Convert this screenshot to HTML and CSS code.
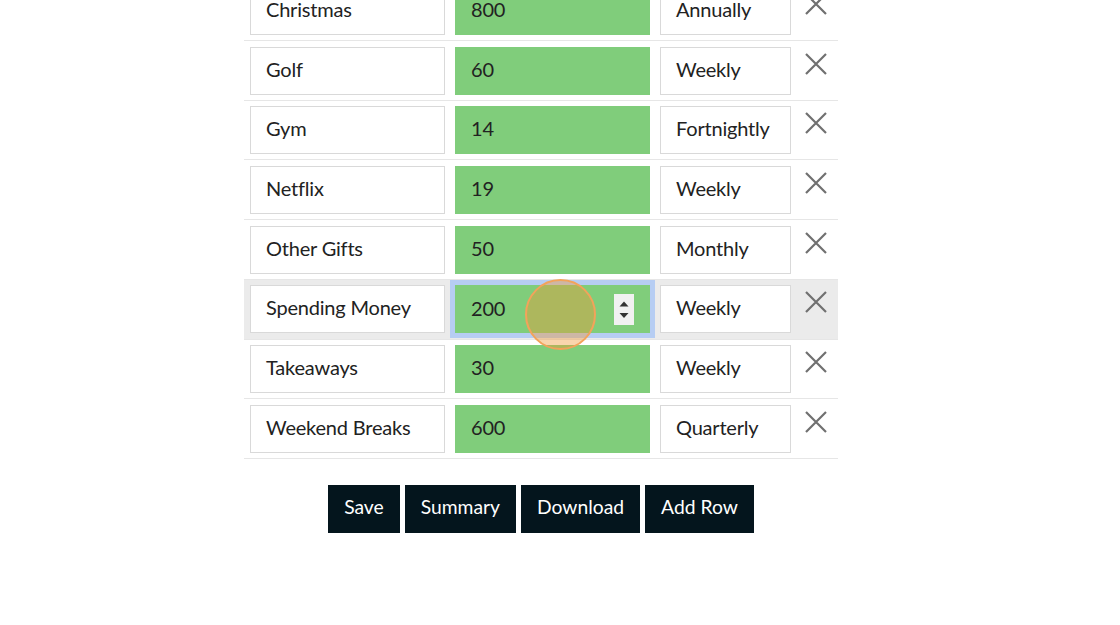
FILE: index.html
```html
<!DOCTYPE html>
<html lang="en">
<head>
<meta charset="utf-8">
<title>Budget</title>
<link rel="stylesheet" href="styles.css">
</head>
<body>
<div class="page">
  <div class="table">
    <div class="row">
      <div class="field">Christmas</div>
      <div class="field amount">800</div>
      <div class="field">Annually</div>
      <div class="remove"><svg viewBox="0 0 22 22" width="22" height="22"><path d="M1 1L21 21M21 1L1 21"/></svg></div>
    </div>
    <div class="row">
      <div class="field">Golf</div>
      <div class="field amount">60</div>
      <div class="field">Weekly</div>
      <div class="remove"><svg viewBox="0 0 22 22" width="22" height="22"><path d="M1 1L21 21M21 1L1 21"/></svg></div>
    </div>
    <div class="row">
      <div class="field">Gym</div>
      <div class="field amount">14</div>
      <div class="field">Fortnightly</div>
      <div class="remove"><svg viewBox="0 0 22 22" width="22" height="22"><path d="M1 1L21 21M21 1L1 21"/></svg></div>
    </div>
    <div class="row">
      <div class="field">Netflix</div>
      <div class="field amount">19</div>
      <div class="field">Weekly</div>
      <div class="remove"><svg viewBox="0 0 22 22" width="22" height="22"><path d="M1 1L21 21M21 1L1 21"/></svg></div>
    </div>
    <div class="row">
      <div class="field">Other Gifts</div>
      <div class="field amount">50</div>
      <div class="field">Monthly</div>
      <div class="remove"><svg viewBox="0 0 22 22" width="22" height="22"><path d="M1 1L21 21M21 1L1 21"/></svg></div>
    </div>
    <div class="row hover">
      <div class="field">Spending Money</div>
      <div class="field amount focus">
        <span>200</span>
        <span class="spin"><svg viewBox="0 0 20 30" width="20" height="30"><path d="M5.5 12.5L10 7.5L14.5 12.5Z"/><path d="M5.5 19L10 24L14.5 19Z"/></svg></span>
        <span class="cursor"></span>
      </div>
      <div class="field">Weekly</div>
      <div class="remove"><svg viewBox="0 0 22 22" width="22" height="22"><path d="M1 1L21 21M21 1L1 21"/></svg></div>
    </div>
    <div class="row">
      <div class="field">Takeaways</div>
      <div class="field amount">30</div>
      <div class="field">Weekly</div>
      <div class="remove"><svg viewBox="0 0 22 22" width="22" height="22"><path d="M1 1L21 21M21 1L1 21"/></svg></div>
    </div>
    <div class="row">
      <div class="field">Weekend Breaks</div>
      <div class="field amount">600</div>
      <div class="field">Quarterly</div>
      <div class="remove"><svg viewBox="0 0 22 22" width="22" height="22"><path d="M1 1L21 21M21 1L1 21"/></svg></div>
    </div>
  </div>
  <div class="actions">
    <button class="btn">Save</button>
    <button class="btn">Summary</button>
    <button class="btn">Download</button>
    <button class="btn">Add Row</button>
  </div>
</div>
</body>
</html>
```
FILE: styles.css
```css
html, body {
  margin: 0;
  padding: 0;
  background: #ffffff;
  font-family: Lato, "Open Sans", sans-serif;
  color: #222222;
  overflow: hidden;
}

.page {
  width: 594px;
  margin: -18.6px 0 0 244px;
}

.table {
  display: flex;
  flex-direction: column;
}

.row {
  box-sizing: border-box;
  height: 59.7px;
  padding: 5.5px 0 0 6px;
  border-bottom: 1px solid #e6e6e6;
  display: grid;
  grid-template-columns: 195px 195px 131px 1fr;
  column-gap: 10px;
  align-items: start;
}

.row.hover {
  background: #ebebeb;
}

.field {
  box-sizing: border-box;
  height: 48px;
  border: 1px solid #d9d9d9;
  background: #ffffff;
  padding: 0 15px 4px;
  font-size: 20px;
  letter-spacing: -0.2px;
  line-height: 42px;
  white-space: nowrap;
  overflow: visible;
}

.field.amount {
  background: #80cd7b;
  border-color: #80cd7b;
}

.field.focus {
  position: relative;
  display: flex;
  align-items: center;
  padding: 0 15px 3px;
  box-shadow: 0 0 0 5px #b6cdf3;
}

.spin {
  margin-left: auto;
  margin-top: 3px;
  width: 20px;
  height: 31px;
  background: #f1f1f1;
  display: flex;
}

.spin svg {
  fill: #333333;
}

.cursor {
  position: absolute;
  left: 69px;
  top: -7px;
  box-sizing: border-box;
  width: 71px;
  height: 71px;
  border-radius: 50%;
  border: 2px solid #f3a35a;
  background: rgba(240, 150, 50, 0.4);
}

.remove {
  padding: 6px 0 0 4px;
  line-height: 0;
}

.remove svg {
  stroke: #707070;
  stroke-width: 2.2;
  fill: none;
}

.actions {
  margin-top: 26px;
  display: flex;
  justify-content: center;
  gap: 5px;
}

.btn {
  height: 48px;
  padding: 0 16px 4px;
  border: none;
  border-radius: 0;
  background: #04151d;
  color: #ffffff;
  font-family: Lato, "Open Sans", sans-serif;
  font-size: 19.3px;
  cursor: pointer;
}
```
